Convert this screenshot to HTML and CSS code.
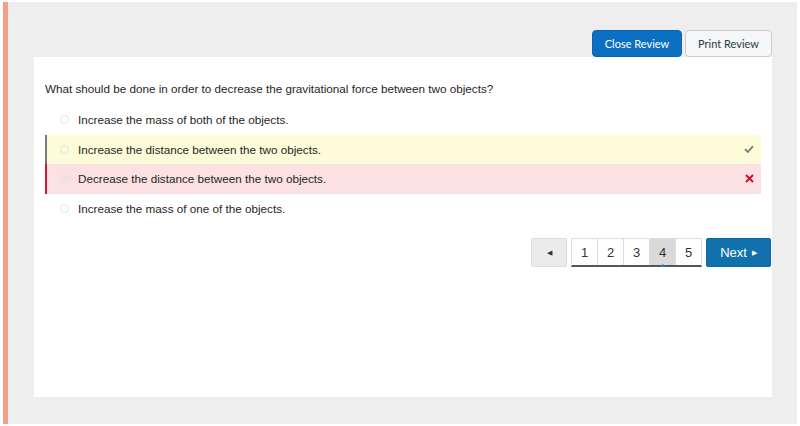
FILE: index.html
```html
<!DOCTYPE html>
<html>
<head>
<meta charset="utf-8">
<link rel="stylesheet" href="styles.css">
</head>
<body>
<div class="frame">
  <div class="toolbar">
    <button class="btn btn-primary">Close Review</button>
    <button class="btn btn-default">Print Review</button>
  </div>
  <div class="card">
    <p class="question">What should be done in order to decrease the gravitational force between two objects?</p>
    <ul class="options">
      <li class="option"><span class="radio"></span><span class="label">Increase the mass of both of the objects.</span></li>
      <li class="option correct"><span class="radio"></span><span class="label">Increase the distance between the two objects.</span>
        <svg class="mark" width="10" height="8" viewBox="0 0 10 8"><polyline points="1,4.2 3.8,7 9,1.2" fill="none" stroke="#7b7b7b" stroke-width="1.8"/></svg>
      </li>
      <li class="option wrong"><span class="radio checked"></span><span class="label">Decrease the distance between the two objects.</span>
        <svg class="mark" width="9" height="9" viewBox="0 0 9 9"><path d="M1 1 L8 8 M8 1 L1 8" stroke="#d0122f" stroke-width="2" fill="none"/></svg>
      </li>
      <li class="option"><span class="radio"></span><span class="label">Increase the mass of one of the objects.</span></li>
    </ul>
    <div class="pager">
      <button class="pbtn prev">&#9664;</button>
      <div class="pages">
        <span class="page">1</span>
        <span class="page">2</span>
        <span class="page">3</span>
        <span class="page active">4</span>
        <span class="page">5</span>
      </div>
      <button class="pbtn next">Next<span class="tri">&#9654;</span></button>
    </div>
  </div>
</div>
</body>
</html>
```
FILE: styles.css
```css
html, body {
  margin: 0;
  padding: 0;
  background: #ffffff;
}
body {
  font-family: "Liberation Sans", Arial, sans-serif;
  color: #2d2d2d;
}
.frame {
  margin: 2px 3px 2px 3px;
  height: 422px;
  box-sizing: border-box;
  background: #eeeeee;
  border-left: 5px solid #f4a088;
  padding: 28px 25px 0 26px;
}
.toolbar {
  display: flex;
  justify-content: flex-end;
  gap: 3px;
  height: 27px;
  align-items: flex-start;
}
.btn {
  height: 27px;
  box-sizing: border-box;
  border-radius: 4px;
  font-family: Lato, sans-serif;
  font-size: 11px;
  padding: 0;
  cursor: pointer;
}
.btn-primary {
  width: 90px;
  background: #0b70c1;
  border: 1px solid #0a65af;
  color: #ffffff;
}
.btn-default {
  width: 87px;
  background: #f5f6f8;
  border: 1px solid #c7cdd1;
  color: #2d3b45;
}
.card {
  background: #ffffff;
  height: 340px;
  box-sizing: border-box;
  padding: 24px 11px 0 11px;
}
.question {
  margin: 0;
  font-size: 11.7px;
  line-height: 16px;
  color: #262626;
}
.options {
  list-style: none;
  margin: 8px 0 0 0;
  padding: 0;
}
.option {
  display: flex;
  align-items: center;
  height: 29.5px;
  box-sizing: border-box;
  padding-left: 13px;
  padding-right: 7px;
  font-size: 11.7px;
  color: #262626;
  border-left: 2px solid transparent;
}
.option.correct {
  background: #fcfcd9;
  border-left-color: #7a7a7a;
}
.option.wrong {
  background: #fbe1e1;
  border-left-color: #c7173a;
}
.radio {
  width: 9px;
  height: 9px;
  border: 1px solid #e4e4e4;
  border-radius: 50%;
  box-sizing: border-box;
  margin-right: 9px;
  position: relative;
  flex: none;
}
.radio.checked::after {
  content: "";
  position: absolute;
  left: 2px;
  top: 2px;
  width: 3px;
  height: 3px;
  border-radius: 50%;
  background: #dcdcdc;
}
.label {
  flex: 1;
}
.mark {
  flex: none;
}
.pager {
  display: flex;
  justify-content: flex-end;
  align-items: flex-start;
  margin-top: 15px;
  margin-right: -10px;
  gap: 4px;
}
.pbtn {
  height: 29px;
  box-sizing: border-box;
  border-radius: 2px;
  padding: 0;
  font-family: "Liberation Sans", Arial, sans-serif;
}
.prev {
  width: 36px;
  background: #ebebeb;
  border: 1px solid #dddddd;
  color: #333333;
  font-size: 7px;
}
.pages {
  display: flex;
  height: 29px;
  box-sizing: border-box;
  border: 1px solid #dddddd;
  border-bottom: 2px solid #555555;
}
.page {
  width: 25px;
  display: flex;
  align-items: center;
  justify-content: center;
  font-size: 13px;
  color: #333333;
  border-left: 1px solid #dddddd;
  position: relative;
}
.page:first-child {
  border-left: none;
}
.page.active {
  background: #dadada;
}
.page.active::after {
  content: "";
  position: absolute;
  bottom: -2px;
  left: 50%;
  margin-left: -3px;
  border-left: 3px solid transparent;
  border-right: 3px solid transparent;
  border-bottom: 3px solid #1f7ac2;
}
.next {
  width: 65px;
  background: #1271ad;
  border: 1px solid #0f679f;
  color: #ffffff;
  font-size: 13px;
}
.tri {
  font-size: 7px;
  vertical-align: 2px;
  margin-left: 5px;
}
```
